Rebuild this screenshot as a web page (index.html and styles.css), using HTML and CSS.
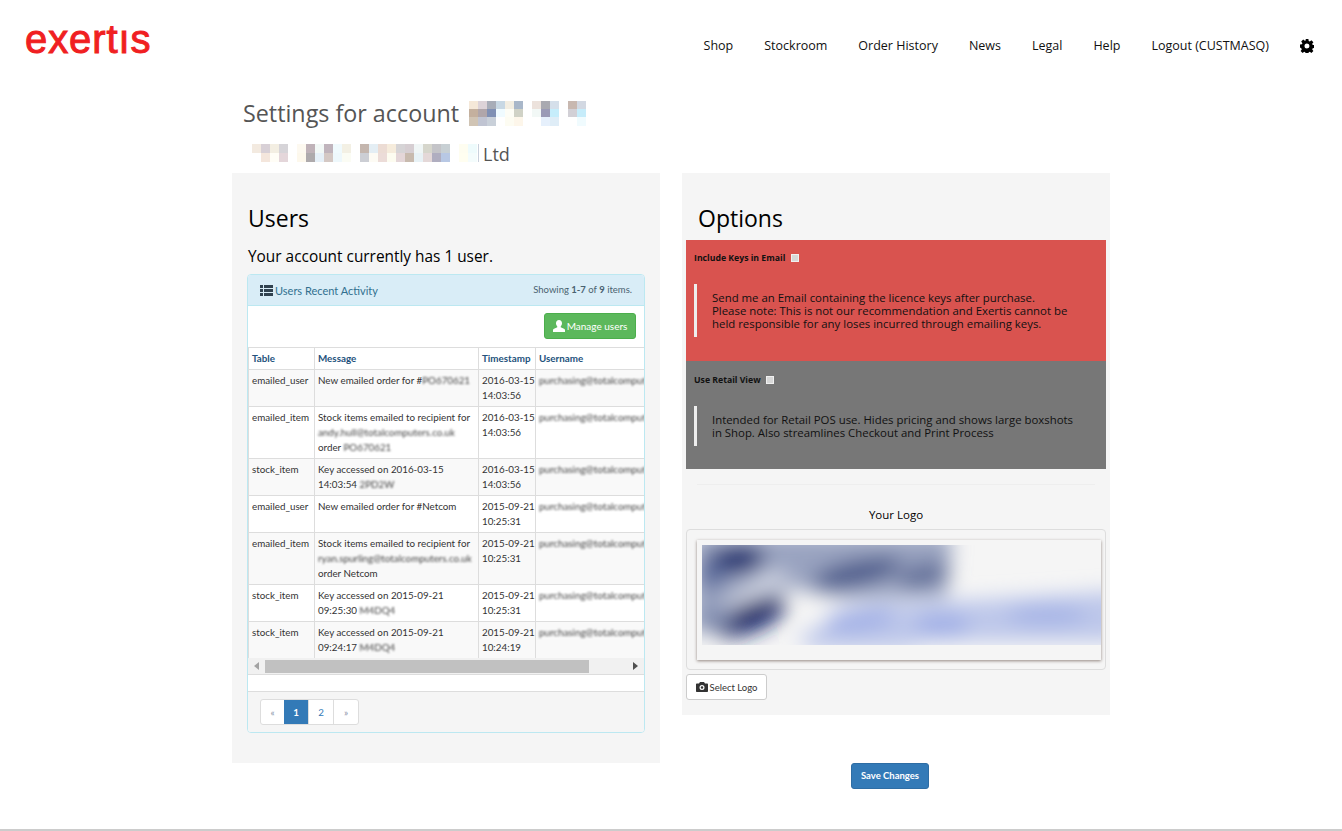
FILE: index.html
```html
<!DOCTYPE html>
<html lang="en">
<head>
    <meta charset="UTF-8">
    <title>Settings for account</title>
    <link rel="stylesheet" href="styles.css">
</head>
<body>
    <header class="topbar">
        <div class="brand">exertıs</div>
        <nav class="topnav">
            <a href="#">Shop</a>
            <a href="#">Stockroom</a>
            <a href="#">Order History</a>
            <a href="#">News</a>
            <a href="#">Legal</a>
            <a href="#">Help</a>
            <a href="#">Logout (CUSTMASQ)</a>
            <a href="#" class="gear" aria-label="Settings">
                <svg width="14" height="14" viewBox="0 0 14 14"><path fill-rule="evenodd" fill="#000" d="M5.6 0h2.8l.3 1.9 1.1.5L11.4 1.2l2 2-1.2 1.6.5 1.1 1.9.3v2.8l-1.9.3-.5 1.1 1.2 1.6-2 2-1.6-1.2-1.1.5-.3 1.9H5.6l-.3-1.9-1.1-.5-1.6 1.2-2-2 1.2-1.6-.5-1.1L0 8.400V5.600l1.900-.3.5-1.100L1.200 2.600l2-2 1.600 1.200 1.100-.5zM7 4.500a2.500 2.500 0 1 0 0 5 2.500 2.500 0 0 0 0-5z"/></svg>
            </a>
        </nav>
    </header>

    <main class="page">
        <h2 class="title"><span>Settings for account</span>
            <svg class="mosaic" width="126" height="25" viewBox="0 0 126 25">
                <g shape-rendering="crispEdges">
                    <rect x="0" y="0" width="9" height="8" fill="#f5e8d8"/><rect x="9" y="0" width="9" height="8" fill="#ddd3d8"/><rect x="18" y="0" width="9" height="8" fill="#a8adb8"/><rect x="27" y="0" width="9" height="8" fill="#c8d8e4"/><rect x="36" y="0" width="9" height="8" fill="#f3eee2"/><rect x="45" y="0" width="9" height="8" fill="#a9b7c9"/><rect x="63" y="0" width="9" height="8" fill="#ece2dc"/><rect x="72" y="0" width="9" height="8" fill="#a9a9b0"/><rect x="81" y="0" width="9" height="8" fill="#d5dfea"/><rect x="99" y="0" width="9" height="8" fill="#c8b8b0"/><rect x="108" y="0" width="9" height="8" fill="#d2d8e2"/>
                    <rect x="0" y="8" width="9" height="8" fill="#c4b09e"/><rect x="9" y="8" width="9" height="8" fill="#b0a6aa"/><rect x="18" y="8" width="9" height="8" fill="#8090b4"/><rect x="27" y="8" width="9" height="8" fill="#f0fbff"/><rect x="36" y="8" width="9" height="8" fill="#fdfdf6"/><rect x="45" y="8" width="9" height="8" fill="#d0d2c6"/><rect x="63" y="8" width="9" height="8" fill="#f2f8f6"/><rect x="72" y="8" width="9" height="8" fill="#9a9ab6"/><rect x="81" y="8" width="9" height="8" fill="#c6edfb"/><rect x="99" y="8" width="9" height="8" fill="#d2d0d6"/><rect x="108" y="8" width="9" height="8" fill="#c6ecfa"/>
                    <rect x="0" y="16" width="9" height="9" fill="#d0c4b4"/><rect x="9" y="16" width="9" height="9" fill="#c0c4d2"/><rect x="18" y="16" width="9" height="9" fill="#c9d0d9"/><rect x="36" y="16" width="9" height="9" fill="#fdfcf2"/><rect x="45" y="16" width="9" height="9" fill="#fdf6ea"/><rect x="72" y="16" width="9" height="9" fill="#e6f0fc"/><rect x="81" y="16" width="9" height="9" fill="#dfedf7"/><rect x="108" y="16" width="9" height="9" fill="#f0fbfe"/>
                </g>
            </svg>
        </h2>
        <div class="subtitle">
            <svg class="mosaic" width="227" height="18" viewBox="0 0 227 18">
                <g shape-rendering="crispEdges">
                    <rect x="0" y="0" width="9" height="9" fill="#f3eae0"/><rect x="9" y="0" width="9" height="9" fill="#d8d0d6"/><rect x="18" y="0" width="9" height="9" fill="#f3eee2"/><rect x="27" y="0" width="9" height="9" fill="#d6d4d8"/><rect x="45" y="0" width="9" height="9" fill="#fdf9f0"/><rect x="54" y="0" width="9" height="9" fill="#bfb2b8"/><rect x="63" y="0" width="9" height="9" fill="#f2f8f6"/><rect x="72" y="0" width="9" height="9" fill="#c0b4bc"/><rect x="81" y="0" width="9" height="9" fill="#f0fafd"/><rect x="90" y="0" width="9" height="9" fill="#f3f0e4"/><rect x="108" y="0" width="9" height="9" fill="#c4b6ae"/><rect x="117" y="0" width="9" height="9" fill="#e4eef4"/><rect x="126" y="0" width="9" height="9" fill="#ecdcd4"/><rect x="135" y="0" width="9" height="9" fill="#f6ecdc"/><rect x="144" y="0" width="9" height="9" fill="#d6d4d6"/><rect x="153" y="0" width="9" height="9" fill="#d6ced2"/><rect x="162" y="0" width="9" height="9" fill="#f0f6f6"/><rect x="171" y="0" width="9" height="9" fill="#d6d6cc"/><rect x="180" y="0" width="9" height="9" fill="#c4c4c8"/><rect x="189" y="0" width="9" height="9" fill="#c8d0d4"/><rect x="207" y="0" width="9" height="9" fill="#fefdf0"/><rect x="216" y="0" width="9" height="9" fill="#eefbfc"/>
                    <rect x="9" y="9" width="9" height="9" fill="#f4e6dc"/><rect x="18" y="9" width="9" height="9" fill="#fffdf6"/><rect x="27" y="9" width="9" height="9" fill="#e4d6da"/><rect x="45" y="9" width="9" height="9" fill="#fdf8ec"/><rect x="54" y="9" width="9" height="9" fill="#aeaaac"/><rect x="63" y="9" width="9" height="9" fill="#e6f0f8"/><rect x="72" y="9" width="9" height="9" fill="#d4c8c4"/><rect x="81" y="9" width="9" height="9" fill="#eef8fc"/><rect x="90" y="9" width="9" height="9" fill="#fbfcf4"/><rect x="108" y="9" width="9" height="9" fill="#ccced4"/><rect x="117" y="9" width="9" height="9" fill="#fdfbf4"/><rect x="126" y="9" width="9" height="9" fill="#ecdcd8"/><rect x="135" y="9" width="9" height="9" fill="#fdfcf0"/><rect x="144" y="9" width="9" height="9" fill="#e4d6d8"/><rect x="153" y="9" width="9" height="9" fill="#c8baae"/><rect x="162" y="9" width="9" height="9" fill="#e8f2f6"/><rect x="171" y="9" width="9" height="9" fill="#e4d8d8"/><rect x="180" y="9" width="9" height="9" fill="#b0aec0"/><rect x="189" y="9" width="9" height="9" fill="#b8c8e4"/><rect x="207" y="9" width="9" height="9" fill="#fffef0"/><rect x="216" y="9" width="9" height="9" fill="#f4fcfc"/>
                    <rect x="226" y="0" width="1" height="18" fill="#c8d0dc"/>
                </g>
            </svg>
            <span>Ltd</span>
        </div>

        <div class="columns">
            <section class="well users">
                <h3>Users</h3>
                <p class="lead">Your account currently has 1 user.</p>
                <div class="panel">
                    <div class="panel-heading">
                        <span class="panel-title">
                            <svg width="13" height="11" viewBox="0 0 13 11"><path fill="#31424f" d="M0 0h3v3H0zM4 0h9v3H4zM0 4h3v3H0zM4 4h9v3H4zM0 8h3v3H0zM4 8h9v3H4z"/></svg>
                            Users Recent Activity
                        </span>
                        <span class="summary">Showing <b>1-7</b> of <b>9</b> items.</span>
                    </div>
                    <div class="toolbar">
                        <a href="#" class="btn btn-success">
                            <svg width="12" height="12" viewBox="0 0 12 12"><path fill="#fff" d="M6 0c1.900 0 3 1.400 3 3.300 0 1.300-.6 2.500-1.300 3.100-.2.500 0 .9.500 1.100L11 8.800c.7.300 1 .7 1 1.400V12H0v-1.800c0-.7.300-1.100 1-1.400l2.800-1.300c.5-.2.700-.6.500-1.100C3.600 5.800 3 4.600 3 3.300 3 1.400 4.100 0 6 0z"/></svg>
                            Manage users
                        </a>
                    </div>
                    <div class="table-clip">
                        <table class="grid">
                            <thead>
                                <tr><th class="c-table">Table</th><th class="c-msg">Message</th><th class="c-time">Timestamp</th><th class="c-user">Username</th></tr>
                            </thead>
                            <tbody>
                                <tr><td>emailed_user</td><td>New emailed order for #<span class="smudge">PO670621</span></td><td>2016-03-15 14:03:56</td><td><span class="smudge">purchasing@totalcomputers.co.uk</span></td></tr>
                                <tr><td>emailed_item</td><td>Stock items emailed to recipient for <span class="smudge">andy.hull@totalcomputers.co.uk</span> order <span class="smudge">PO670621</span></td><td>2016-03-15 14:03:56</td><td><span class="smudge">purchasing@totalcomputers.co.uk</span></td></tr>
                                <tr><td>stock_item</td><td>Key accessed on 2016-03-15 14:03:54 <span class="smudge">2PD2W</span></td><td>2016-03-15 14:03:56</td><td><span class="smudge">purchasing@totalcomputers.co.uk</span></td></tr>
                                <tr><td>emailed_user</td><td>New emailed order for #Netcom</td><td>2015-09-21 10:25:31</td><td><span class="smudge">purchasing@totalcomputers.co.uk</span></td></tr>
                                <tr><td>emailed_item</td><td>Stock items emailed to recipient for <span class="smudge">ryan.spurling@totalcomputers.co.uk</span> order Netcom</td><td>2015-09-21 10:25:31</td><td><span class="smudge">purchasing@totalcomputers.co.uk</span></td></tr>
                                <tr><td>stock_item</td><td>Key accessed on 2015-09-21 09:25:30 <span class="smudge">M4DQ4</span></td><td>2015-09-21 10:25:31</td><td><span class="smudge">purchasing@totalcomputers.co.uk</span></td></tr>
                                <tr><td>stock_item</td><td>Key accessed on 2015-09-21 09:24:17 <span class="smudge">M4DQ4</span></td><td>2015-09-21 10:24:19</td><td><span class="smudge">purchasing@totalcomputers.co.uk</span></td></tr>
                            </tbody>
                        </table>
                    </div>
                    <div class="scrollbar">
                        <span class="arrow arrow-left"></span>
                        <span class="thumb"></span>
                        <span class="arrow arrow-right"></span>
                    </div>
                    <div class="spacer"></div>
                    <div class="panel-footer">
                        <ul class="pagination">
                            <li class="muted">«</li>
                            <li class="active">1</li>
                            <li>2</li>
                            <li class="muted">»</li>
                        </ul>
                    </div>
                </div>
            </section>

            <div class="side">
                <section class="well options">
                    <h3>Options</h3>
                    <div class="option option-red">
                        <label class="option-label">Include Keys in Email <input type="checkbox"></label>
                        <blockquote>Send me an Email containing the licence keys after purchase.<br>Please note: This is not our recommendation and Exertis cannot be held responsible for any loses incurred through emailing keys.</blockquote>
                    </div>
                    <div class="option option-grey">
                        <label class="option-label">Use Retail View <input type="checkbox"></label>
                        <blockquote>Intended for Retail POS use. Hides pricing and shows large boxshots in Shop. Also streamlines Checkout and Print Process</blockquote>
                    </div>
                    <hr>
                    <div class="logo-title">Your Logo</div>
                    <div class="logo-box">
                        <div class="thumbnail">
                            <svg width="399" height="100" viewBox="0 0 399 100">
                                <defs>
                                    <filter id="smear" x="-20%" y="-20%" width="140%" height="140%"><feGaussianBlur stdDeviation="10"/></filter>
                                    <clipPath id="logo-clip"><rect width="399" height="100"/></clipPath>
                                </defs>
                                <g clip-path="url(#logo-clip)">
                                    <rect width="399" height="100" fill="#f5f5f5"/>
                                    <g filter="url(#smear)">
                                        <path fill="#99a3c0" d="M-10 -10H250L245 52 140 54 90 42 30 80-10 90z"/>
                                        <path fill="#d6dae6" d="M20 58 70 26 90 30 35 68z"/>
                                        <ellipse cx="33" cy="15" rx="30" ry="14" fill="#16296e" transform="rotate(-8 33 15)"/>
                                        <ellipse cx="10" cy="30" rx="14" ry="14" fill="#5c6c9c"/>
                                        <ellipse cx="155" cy="28" rx="46" ry="12" fill="#475688" transform="rotate(-12 155 28)"/>
                                        <ellipse cx="222" cy="30" rx="26" ry="11" fill="#5f6c96" transform="rotate(-12 222 30)"/>
                                        <ellipse cx="48" cy="72" rx="38" ry="15" fill="#14266a" transform="rotate(-22 48 72)"/>
                                        <ellipse cx="12" cy="74" rx="20" ry="9" fill="#7d89ad"/>
                                        <path fill="#bdc7ea" d="M95 92 170 60 290 54 420 46V96H230L200 104H110z"/>
                                        <ellipse cx="158" cy="74" rx="36" ry="11" fill="#a0afe6" transform="rotate(-8 158 74)"/>
                                        <ellipse cx="240" cy="80" rx="28" ry="11" fill="#a0afe6"/>
                                        <ellipse cx="345" cy="70" rx="40" ry="10" fill="#a6b4e6"/>
                                    </g>
                                </g>
                            </svg>
                        </div>
                    </div>
                    <a href="#" class="btn btn-default btn-select">
                        <svg width="12" height="10" viewBox="0 0 12 10"><path fill-rule="evenodd" fill="#333" d="M1 1.500h2L4 0h4l1 1.500h2c.6 0 1 .4 1 1V9c0 .6-.4 1-1 1H1c-.6 0-1-.4-1-1V2.500c0-.6.4-1 1-1zM6 3a2.500 2.500 0 1 0 0 5 2.500 2.500 0 0 0 0-5zm0 1.200a1.300 1.300 0 1 1 0 2.600 1.300 1.300 0 0 1 0-2.600z"/></svg>
                        Select Logo
                    </a>
                </section>
                <div class="save-row"><a href="#" class="btn btn-primary">Save Changes</a></div>
            </div>
        </div>
    </main>
    <footer class="page-foot"></footer>
</body>
</html>
```

FILE: styles.css
```css
html, body {
    height: 831px;
    overflow: hidden;
}
body {
    margin: 0;
    background-color: #fff;
    color: #000;
    font-family: "Open Sans", "Noto Sans", sans-serif;
    position: relative;
}
a {
    color: inherit;
    text-decoration: none;
}

/* top bar */
.topbar {
    height: 95px;
    display: flex;
    justify-content: space-between;
    box-sizing: border-box;
    padding: 0 28px 0 25px;
}
.brand {
    margin-top: 16px;
    font-family: "Liberation Sans", sans-serif;
    font-size: 40px;
    line-height: 46px;
    letter-spacing: 0.9px;
    color: #f01f22;
    -webkit-text-stroke: 1px #f01f22;
}
.topnav {
    display: flex;
    gap: 31px;
    margin-top: 37px;
    height: 17px;
    font-size: 12.5px;
    line-height: 17px;
    color: #111;
}
.gear {
    display: flex;
    align-items: center;
}

/* page */
.page {
    margin-left: 232px;
    width: 878px;
}
.title {
    margin: 0 0 0 11px;
    height: 36px;
    display: flex;
    align-items: center;
    gap: 10px;
    font-size: 23.3px;
    font-weight: 400;
    line-height: 36px;
    color: #555;
}
.mosaic {
    display: block;
    flex: none;
}
.subtitle {
    margin: 13px 0 0 20px;
    height: 18px;
    display: flex;
    align-items: center;
    gap: 4px;
    font-size: 18px;
    line-height: 18px;
    color: #555;
}
.subtitle span {
    position: relative;
    top: 1px;
}
.columns {
    margin-top: 11px;
    display: flex;
    gap: 22px;
    align-items: flex-start;
}
.well {
    background-color: #f5f5f5;
    width: 428px;
    box-sizing: border-box;
}
.well h3 {
    margin: 0;
    font-size: 23px;
    font-weight: 400;
    line-height: 30px;
}

/* users */
.users {
    height: 590px;
    padding: 30px 15px 0 16px;
}
.lead {
    margin: 14px 0 0;
    font-size: 15.4px;
    line-height: 20px;
}
.panel {
    margin: 7px 0 0 -1px;
    height: 459px;
    box-sizing: border-box;
    border: 1px solid #bce8f1;
    border-radius: 4px;
    background-color: #fff;
    overflow: hidden;
    font-family: Lato, sans-serif;
    font-size: 9.8px;
    display: flex;
    flex-direction: column;
}
.panel-heading {
    height: 30px;
    flex: none;
    background-color: #d9edf7;
    border-bottom: 1px solid #bce8f1;
    box-sizing: content-box;
    display: flex;
    justify-content: space-between;
    align-items: center;
    padding: 0 12px;
    color: #31708f;
}
.panel-title {
    font-size: 11px;
    display: flex;
    align-items: center;
    gap: 2px;
}
.panel-title svg {
    display: block;
}
.summary {
    font-size: 9.5px;
    color: #4a6270;
    position: relative;
    top: -1px;
}
.toolbar {
    height: 41px;
    flex: none;
    box-sizing: border-box;
    padding: 7px 8px 0 0;
    display: flex;
    justify-content: flex-end;
}
.btn {
    display: inline-flex;
    align-items: center;
    justify-content: center;
    gap: 2px;
    box-sizing: border-box;
    height: 26px;
    border: 1px solid transparent;
    border-radius: 3px;
    font-family: Lato, sans-serif;
    font-size: 10px;
}
.btn-success {
    width: 92px;
    background-color: #5cb85c;
    border-color: #4cae4c;
    color: #fff;
}
.btn-default {
    background-color: #fff;
    border-color: #ccc;
    color: #333;
}
.btn-primary {
    width: 78px;
    background-color: #337ab7;
    border-color: #2e6da4;
    color: #fff;
    font-weight: 700;
    font-size: 9.5px;
}

/* table */
.table-clip {
    height: 311px;
    flex: none;
    overflow: hidden;
}
.grid {
    border-collapse: collapse;
    table-layout: fixed;
    width: 407px;
    color: #333;
    line-height: 15px;
}
.grid th, .grid td {
    box-sizing: border-box;
    border: 1px solid #ddd;
    padding: 3px;
    vertical-align: top;
    text-align: left;
    overflow: hidden;
}
.grid th {
    color: #23527c;
    font-weight: 700;
}
.grid tbody tr:nth-child(odd) {
    background-color: #f9f9f9;
}
.grid td:nth-child(3), .grid th:nth-child(3) {
    padding-right: 0;
}
.c-table { width: 66px; }
.c-msg { width: 164px; }
.c-time { width: 57px; }
.c-user { width: 120px; }
.smudge {
    display: inline-block;
    filter: blur(1px);
    color: #444;
}
.grid td:last-child {
    white-space: nowrap;
}

/* scrollbar drawn flat, same as the rendered one */
.scrollbar {
    height: 17px;
    flex: none;
    background-color: #f1f1f1;
    box-sizing: border-box;
    border-bottom: 1px solid #ddd;
    display: flex;
    align-items: center;
    padding: 0 6px;
}
.thumb {
    width: 324px;
    height: 13px;
    margin-left: 6px;
    background-color: #c1c1c1;
}
.arrow {
    width: 0;
    height: 0;
    border-top: 4px solid transparent;
    border-bottom: 4px solid transparent;
}
.arrow-left {
    border-right: 5px solid #a3a3a3;
}
.arrow-right {
    border-left: 5px solid #505050;
    margin-left: auto;
}
.spacer {
    height: 16px;
    flex: none;
}
.panel-footer {
    flex: 1;
    background-color: #f5f5f5;
    border-top: 1px solid #ddd;
    padding: 7px 12px 0;
}
.pagination {
    list-style: none;
    margin: 0;
    padding: 0;
    display: inline-flex;
    height: 26px;
    border: 1px solid #ddd;
    border-radius: 3px;
    background-color: #fff;
    box-sizing: border-box;
}
.pagination li {
    width: 24px;
    display: flex;
    align-items: center;
    justify-content: center;
    color: #337ab7;
    border-left: 1px solid #ddd;
}
.pagination li:first-child {
    border-left: 0;
    width: 23px;
}
.pagination .muted {
    color: #8a93a8;
}
.pagination .active {
    background-color: #337ab7;
    color: #fff;
    font-weight: 700;
    border-left: 0;
}

/* options */
.side {
    width: 428px;
}
.options {
    height: 542px;
    padding: 30px 4px 0;
}
.options h3 {
    padding-left: 12px;
    margin-bottom: 7px;
}
.option {
    box-sizing: border-box;
    padding: 11px 8px 0;
}
.option-red {
    height: 121px;
    background-color: #d9534f;
}
.option-grey {
    height: 108px;
    padding-top: 12px;
    background-color: #777;
}
.option-label {
    display: block;
    font-size: 8.7px;
    font-weight: 700;
    line-height: 14px;
    color: #111;
}
.option-label input {
    appearance: none;
    box-sizing: border-box;
    width: 8px;
    height: 8px;
    margin: 0 0 0 3px;
    vertical-align: -1px;
    background-color: #d8d8d8;
    border: 1px solid #f0f0f0;
}
.option blockquote {
    margin: 19px 0 0;
    padding: 7px 24px 7px 15px;
    border-left: 3px solid #eee;
    font-size: 11.4px;
    line-height: 13px;
    color: #111;
}
.options hr {
    margin: 15px 11px 0;
    border: 0;
    border-top: 1px solid #eee;
}
.logo-title {
    margin-top: 21px;
    text-align: center;
    font-size: 11.5px;
    line-height: 17px;
}
.logo-box {
    margin-top: 6px;
    height: 141px;
    box-sizing: border-box;
    border: 1px solid #ddd;
    border-radius: 4px;
    padding: 10px 4px 0 10px;
}
.thumbnail {
    height: 120px;
    box-sizing: border-box;
    padding: 5px 0 0 5px;
    box-shadow: 0 1px 3px rgba(80, 60, 50, 0.6);
    overflow: hidden;
}
.thumbnail svg {
    display: block;
}
.btn-select {
    margin-top: 4px;
    width: 81px;
    font-size: 9.5px;
}
.save-row {
    margin-top: 47px;
    padding-right: 12px;
    text-align: center;
}

/* bottom rule */
.page-foot {
    position: absolute;
    left: 0;
    right: 0;
    bottom: 0;
    height: 2px;
    background-color: #ccc;
}
```
